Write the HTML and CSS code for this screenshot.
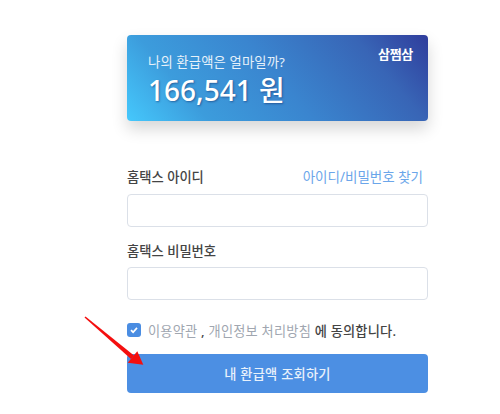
FILE: index.html
```html
<!DOCTYPE html>
<html lang="ko">
<head>
<meta charset="utf-8">
<title>환급액 조회</title>
<link rel="stylesheet" href="styles.css">
</head>
<body>
<main class="page">
  <section class="card">
    <div class="brand">삼쩜삼</div>
    <p class="card-title">나의 환급액은 얼마일까?</p>
    <p class="amount">166,541 원</p>
  </section>
  <form class="form">
    <div class="label-row">
      <span class="label">홈택스 아이디</span>
      <span class="find">아이디/비밀번호 찾기</span>
    </div>
    <div class="input"></div>
    <div class="label-row second">
      <span class="label">홈택스 비밀번호</span>
    </div>
    <div class="input"></div>
    <div class="agree">
      <span class="check">
        <svg width="10" height="10" viewBox="0 0 10 10"><path d="M2 5.2 4.1 7.2 8 2.900" fill="none" stroke="#fff" stroke-width="1.7"/></svg>
      </span>
      <span class="terms"><span class="muted">이용약관</span> , <span class="muted">개인정보 처리방침</span> 에 동의합니다.</span>
    </div>
    <div class="button">내 환급액 조회하기</div>
  </form>
</main>
<svg class="arrow" width="70" height="64" viewBox="0 0 70 64"><path d="M.5 1.500 1.500.5 50 39.500 47 43Z" fill="#f40f0f"/><path d="M59.300 48.700 43.700 46.700 53.300 35.300Z" fill="#f40f0f"/></svg>
</body>
</html>
```
FILE: styles.css
```css
* { box-sizing: border-box; }
html, body { margin: 0; height: 100%; background: #fff; overflow: hidden; }
body { position: relative; font-family: "Noto Sans", "Noto Sans CJK KR", sans-serif; }
.page { width: 301px; margin-left: 127px; padding-top: 35px; }
.card {
  position: relative;
  height: 86px;
  padding: 16px 21px 0;
  border-radius: 4px;
  color: #fff;
  background: linear-gradient(50deg, #45c8fc 0%, #3c9cdc 22%, #3a85cf 50%, #3865b6 80%, #2f3d9c 100%);
  box-shadow: 0 8px 16px rgba(0, 0, 0, .16);
}
.brand { position: absolute; top: 10px; right: 15px; font-size: 13px; line-height: 18px; font-weight: 700; letter-spacing: -.3px; }
.card-title { margin: 0; font-size: 13.300px; line-height: 22px; letter-spacing: .15px; color: #e6f1fa; }
.amount { margin: 0; font-size: 28px; line-height: 35px; font-weight: 500; text-shadow: 1px 1px 2px rgba(20, 50, 110, .55); }
.form { padding-top: 46px; }
.label-row { display: flex; justify-content: space-between; align-items: center; height: 18px; padding-right: 5px; margin-bottom: 9px; }
.label-row.second { margin-top: 14px; margin-bottom: 8px; }
.label { font-size: 13.300px; font-weight: 500; color: #444; }
.find { font-size: 13.500px; color: #6ba6ea; }
.input { height: 33px; background: #fff; border: 1px solid #dbe0e8; border-radius: 4px; }
.agree { display: flex; align-items: center; gap: 7px; height: 18px; margin-top: 21px; }
.check { display: flex; align-items: center; justify-content: center; width: 14px; height: 14px; border-radius: 3px; background: #4a8de2; }
.terms { font-size: 13.200px; color: #444; font-weight: 500; letter-spacing: .22px; }
.muted { color: #a0a6b0; font-weight: 400; }
.button {
  display: flex; align-items: center; justify-content: center;
  height: 39px; margin-top: 15px;
  border-radius: 4px; background: #4c8fe3;
  color: #e8f1fb; font-size: 13.200px; font-weight: 500; letter-spacing: .25px;
}
.arrow { position: absolute; left: 84px; top: 316px; }
```
